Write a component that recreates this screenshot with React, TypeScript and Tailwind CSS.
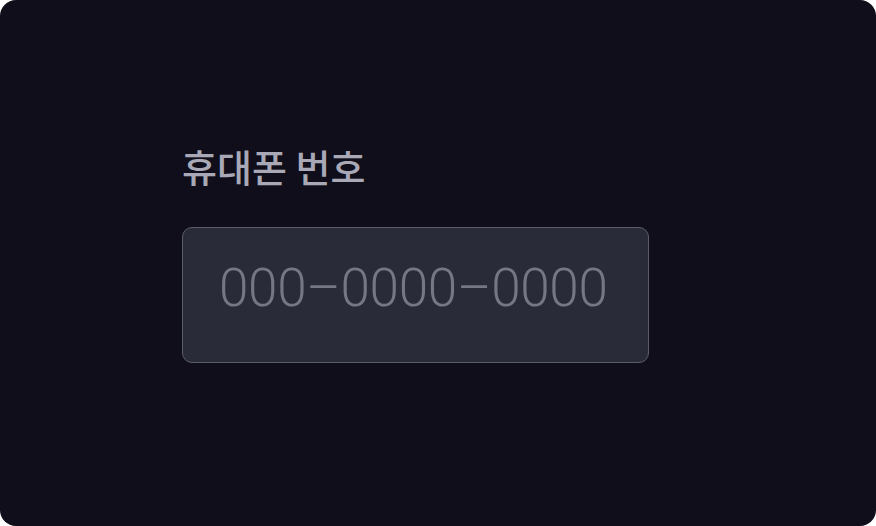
export default function App() {
	return (
		<div className="w-[876px] h-[526px] bg-white">
			<div
				className="w-full h-full rounded-[16px] bg-[#0f0e1a] pl-[182px] pt-[138px] flex flex-col"
				style={{ fontFamily: '"Noto Sans CJK KR", "Noto Sans", sans-serif' }}
			>
				<label className="text-[38px] leading-[56px] font-medium text-[#a8a8b6]">
					휴대폰 번호
				</label>
				<div className="mt-[33px] w-[467px] h-[136px] rounded-[10px] border border-[#5c5d6b] bg-[#2a2b38] flex items-center pl-[36px] pb-[12px]">
					<input
						type="text"
						placeholder="000–0000–0000"
						style={{ fontFamily: 'Roboto, "Noto Sans CJK KR", sans-serif' }}
						className="w-full bg-transparent outline-none text-[53px] tracking-[-0.3px] font-light text-[#7a7b88] placeholder:text-[#767785]"
					/>
				</div>
			</div>
		</div>
	);
}
